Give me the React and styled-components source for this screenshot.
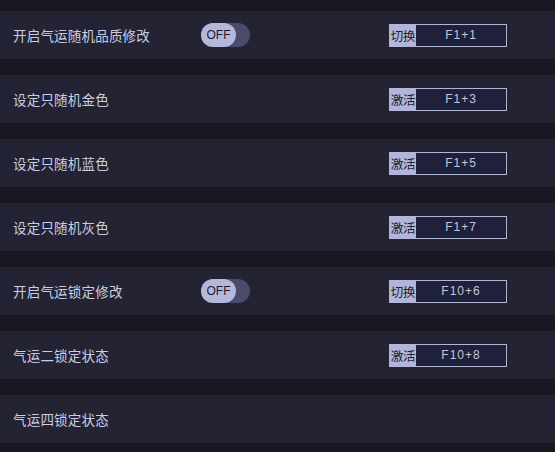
import * as React from 'react';
import styled, { createGlobalStyle } from 'styled-components';

const GlobalStyle = createGlobalStyle`
  html, body {
    margin: 0;
    padding: 0;
    background: #171722;
  }
  body {
    font-family: "Noto Sans CJK SC", "Microsoft YaHei", sans-serif;
  }
`;

const List = styled.div`
  display: flex;
  flex-direction: column;
  gap: 16px;
  padding-top: 11px;
  width: 555px;
  height: 452px;
  overflow: hidden;
  box-sizing: border-box;
`;

const Row = styled.div`
  display: grid;
  grid-template-columns: 188px 1fr 118px;
  align-items: center;
  height: 48px;
  flex-shrink: 0;
  padding: 0 48px 0 13px;
  background: #232333;
  box-sizing: border-box;
`;

const Label = styled.span`
  font-size: 13.5px;
  color: #cbcde2;
  letter-spacing: 0.2px;
`;

const Toggle = styled.div`
  display: flex;
  align-items: center;
  width: 49px;
  height: 24px;
  border-radius: 12px;
  background: #4b4c6c;
`;

const Knob = styled.div`
  display: flex;
  align-items: center;
  justify-content: center;
  width: 35px;
  height: 24px;
  border-radius: 12px;
  background: #b5b8dc;
  color: #1c1c2a;
  font-family: "Liberation Sans", Arial, sans-serif;
  font-size: 12px;
`;

const Hotkey = styled.div`
  display: flex;
  width: 118px;
  height: 23px;
  border: 1px solid #b3b5d8;
  box-sizing: border-box;
  grid-column: 3;
`;

const Mode = styled.span`
  display: flex;
  align-items: center;
  justify-content: center;
  width: 26px;
  background: #b3b5d8;
  color: #22222e;
  font-size: 12.5px;
  letter-spacing: -0.3px;
`;

const Keys = styled.span`
  flex: 1;
  display: flex;
  align-items: center;
  justify-content: center;
  background: #20203a;
  color: #c4c5de;
  font-family: "Liberation Sans", Arial, sans-serif;
  font-size: 12px;
  letter-spacing: 1px;
`;

const rows = [
  { label: '开启气运随机品质修改', toggle: true, mode: '切换', keys: 'F1+1' },
  { label: '设定只随机金色', mode: '激活', keys: 'F1+3' },
  { label: '设定只随机蓝色', mode: '激活', keys: 'F1+5' },
  { label: '设定只随机灰色', mode: '激活', keys: 'F1+7' },
  { label: '开启气运锁定修改', toggle: true, mode: '切换', keys: 'F10+6' },
  { label: '气运二锁定状态', mode: '激活', keys: 'F10+8' },
  { label: '气运四锁定状态' },
];

export default function App() {
  return (
    <>
      <GlobalStyle />
      <List>
        {rows.map(row => (
          <Row key={row.label}>
            <Label>{row.label}</Label>
            {row.toggle ? (
              <Toggle>
                <Knob>OFF</Knob>
              </Toggle>
            ) : (
              <span />
            )}
            {row.keys && (
              <Hotkey>
                <Mode>{row.mode}</Mode>
                <Keys>{row.keys}</Keys>
              </Hotkey>
            )}
          </Row>
        ))}
      </List>
    </>
  );
}
